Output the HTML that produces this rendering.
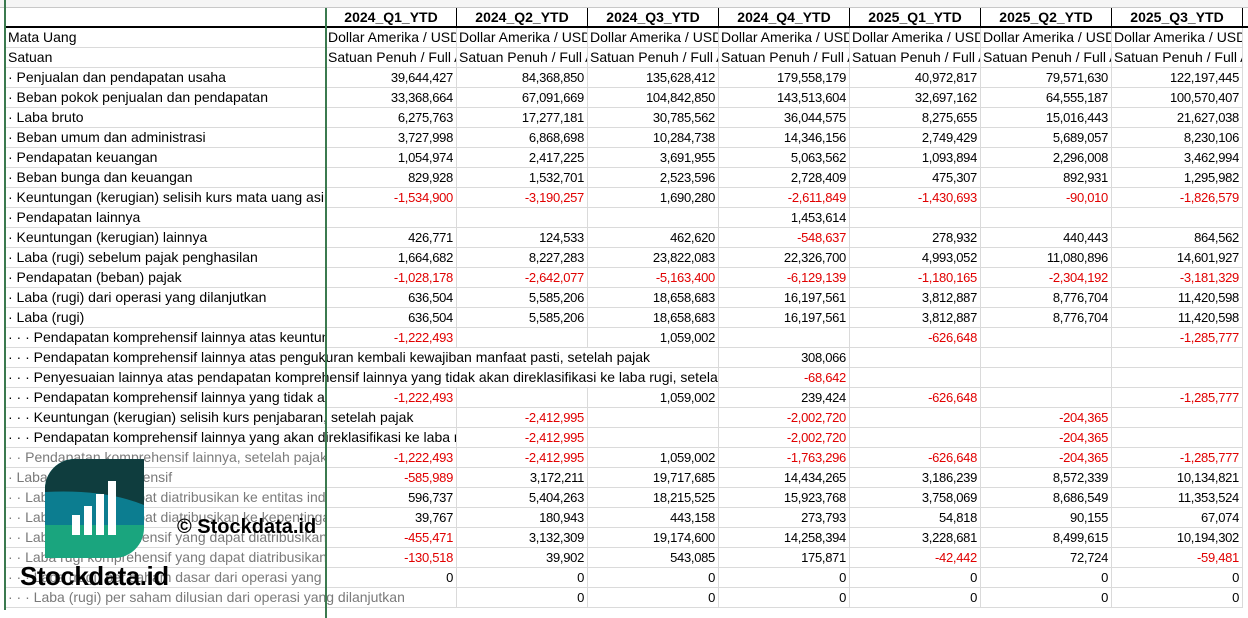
<!DOCTYPE html>
<html><head><meta charset="utf-8"><style>
body{margin:0;width:1248px;height:610px;overflow:hidden;background:#fff;font-family:"Liberation Sans",sans-serif;position:relative}
.top{position:absolute;left:0;top:0;width:1248px;height:7px;background:#f5f5f5;border-bottom:1px solid #c8c8c8}
.row{position:absolute;left:6px;height:20px;display:flex}
.c{width:131px;flex:none;box-sizing:border-box;border-right:1px solid #dadada;border-bottom:1px solid #dadada;text-align:right;padding-right:3px;overflow:hidden;white-space:nowrap;font-size:13px;line-height:19px;color:#000;letter-spacing:-0.3px}
.a{width:320px;text-align:left;padding-left:2px;padding-right:0;font-size:14px;letter-spacing:0}
.l{text-align:left;padding-left:2px;font-size:14px;letter-spacing:0}
.n{color:#e00000}
.g{color:#7a7a7a}
.h .c{font-weight:bold;font-size:14px;letter-spacing:0;text-align:center;border-bottom:2px solid #000;border-right:1px solid #000;padding:0}
.w2{width:451px}.w4{width:713px}
.vl{position:absolute;top:0;height:610px;width:2px;background:#3b7a4f}
</style></head><body>
<div class="top"></div>
<div class="row h" style="top:8px"><div class="c a" style="border-right:none"></div><div class="c">2024_Q1_YTD</div><div class="c">2024_Q2_YTD</div><div class="c">2024_Q3_YTD</div><div class="c">2024_Q4_YTD</div><div class="c">2025_Q1_YTD</div><div class="c">2025_Q2_YTD</div><div class="c">2025_Q3_YTD</div><div class="c"></div></div>
<div class="row" style="top:28px"><div class="c a">Mata Uang</div><div class="c l">Dollar Amerika / USD</div><div class="c l">Dollar Amerika / USD</div><div class="c l">Dollar Amerika / USD</div><div class="c l">Dollar Amerika / USD</div><div class="c l">Dollar Amerika / USD</div><div class="c l">Dollar Amerika / USD</div><div class="c l">Dollar Amerika / USD</div></div>
<div class="row" style="top:48px"><div class="c a">Satuan</div><div class="c l">Satuan Penuh / Full Amount</div><div class="c l">Satuan Penuh / Full Amount</div><div class="c l">Satuan Penuh / Full Amount</div><div class="c l">Satuan Penuh / Full Amount</div><div class="c l">Satuan Penuh / Full Amount</div><div class="c l">Satuan Penuh / Full Amount</div><div class="c l">Satuan Penuh / Full Amount</div></div>
<div class="row" style="top:68px"><div class="c a">· Penjualan dan pendapatan usaha</div><div class="c">39,644,427</div><div class="c">84,368,850</div><div class="c">135,628,412</div><div class="c">179,558,179</div><div class="c">40,972,817</div><div class="c">79,571,630</div><div class="c">122,197,445</div></div>
<div class="row" style="top:88px"><div class="c a">· Beban pokok penjualan dan pendapatan</div><div class="c">33,368,664</div><div class="c">67,091,669</div><div class="c">104,842,850</div><div class="c">143,513,604</div><div class="c">32,697,162</div><div class="c">64,555,187</div><div class="c">100,570,407</div></div>
<div class="row" style="top:108px"><div class="c a">· Laba bruto</div><div class="c">6,275,763</div><div class="c">17,277,181</div><div class="c">30,785,562</div><div class="c">36,044,575</div><div class="c">8,275,655</div><div class="c">15,016,443</div><div class="c">21,627,038</div></div>
<div class="row" style="top:128px"><div class="c a">· Beban umum dan administrasi</div><div class="c">3,727,998</div><div class="c">6,868,698</div><div class="c">10,284,738</div><div class="c">14,346,156</div><div class="c">2,749,429</div><div class="c">5,689,057</div><div class="c">8,230,106</div></div>
<div class="row" style="top:148px"><div class="c a">· Pendapatan keuangan</div><div class="c">1,054,974</div><div class="c">2,417,225</div><div class="c">3,691,955</div><div class="c">5,063,562</div><div class="c">1,093,894</div><div class="c">2,296,008</div><div class="c">3,462,994</div></div>
<div class="row" style="top:168px"><div class="c a">· Beban bunga dan keuangan</div><div class="c">829,928</div><div class="c">1,532,701</div><div class="c">2,523,596</div><div class="c">2,728,409</div><div class="c">475,307</div><div class="c">892,931</div><div class="c">1,295,982</div></div>
<div class="row" style="top:188px"><div class="c a">· Keuntungan (kerugian) selisih kurs mata uang asing</div><div class="c n">-1,534,900</div><div class="c n">-3,190,257</div><div class="c">1,690,280</div><div class="c n">-2,611,849</div><div class="c n">-1,430,693</div><div class="c n">-90,010</div><div class="c n">-1,826,579</div></div>
<div class="row" style="top:208px"><div class="c a">· Pendapatan lainnya</div><div class="c"></div><div class="c"></div><div class="c"></div><div class="c">1,453,614</div><div class="c"></div><div class="c"></div><div class="c"></div></div>
<div class="row" style="top:228px"><div class="c a">· Keuntungan (kerugian) lainnya</div><div class="c">426,771</div><div class="c">124,533</div><div class="c">462,620</div><div class="c n">-548,637</div><div class="c">278,932</div><div class="c">440,443</div><div class="c">864,562</div></div>
<div class="row" style="top:248px"><div class="c a">· Laba (rugi) sebelum pajak penghasilan</div><div class="c">1,664,682</div><div class="c">8,227,283</div><div class="c">23,822,083</div><div class="c">22,326,700</div><div class="c">4,993,052</div><div class="c">11,080,896</div><div class="c">14,601,927</div></div>
<div class="row" style="top:268px"><div class="c a">· Pendapatan (beban) pajak</div><div class="c n">-1,028,178</div><div class="c n">-2,642,077</div><div class="c n">-5,163,400</div><div class="c n">-6,129,139</div><div class="c n">-1,180,165</div><div class="c n">-2,304,192</div><div class="c n">-3,181,329</div></div>
<div class="row" style="top:288px"><div class="c a">· Laba (rugi) dari operasi yang dilanjutkan</div><div class="c">636,504</div><div class="c">5,585,206</div><div class="c">18,658,683</div><div class="c">16,197,561</div><div class="c">3,812,887</div><div class="c">8,776,704</div><div class="c">11,420,598</div></div>
<div class="row" style="top:308px"><div class="c a">· Laba (rugi)</div><div class="c">636,504</div><div class="c">5,585,206</div><div class="c">18,658,683</div><div class="c">16,197,561</div><div class="c">3,812,887</div><div class="c">8,776,704</div><div class="c">11,420,598</div></div>
<div class="row" style="top:328px"><div class="c a">· · · Pendapatan komprehensif lainnya atas keuntungan</div><div class="c n">-1,222,493</div><div class="c"></div><div class="c">1,059,002</div><div class="c"></div><div class="c n">-626,648</div><div class="c"></div><div class="c n">-1,285,777</div></div>
<div class="row" style="top:348px"><div class="c a w4">· · · Pendapatan komprehensif lainnya atas pengukuran kembali kewajiban manfaat pasti, setelah pajak</div><div class="c">308,066</div><div class="c"></div><div class="c"></div><div class="c"></div></div>
<div class="row" style="top:368px"><div class="c a w4">· · · Penyesuaian lainnya atas pendapatan komprehensif lainnya yang tidak akan direklasifikasi ke laba rugi, setelah pajak</div><div class="c n">-68,642</div><div class="c"></div><div class="c"></div><div class="c"></div></div>
<div class="row" style="top:388px"><div class="c a">· · · Pendapatan komprehensif lainnya yang tidak akan</div><div class="c n">-1,222,493</div><div class="c"></div><div class="c">1,059,002</div><div class="c">239,424</div><div class="c n">-626,648</div><div class="c"></div><div class="c n">-1,285,777</div></div>
<div class="row" style="top:408px"><div class="c a w2">· · · Keuntungan (kerugian) selisih kurs penjabaran, setelah pajak</div><div class="c n">-2,412,995</div><div class="c"></div><div class="c n">-2,002,720</div><div class="c"></div><div class="c n">-204,365</div><div class="c"></div></div>
<div class="row" style="top:428px"><div class="c a w2">· · · Pendapatan komprehensif lainnya yang akan direklasifikasi ke laba ru</div><div class="c n">-2,412,995</div><div class="c"></div><div class="c n">-2,002,720</div><div class="c"></div><div class="c n">-204,365</div><div class="c"></div></div>
<div class="row" style="top:448px"><div class="c a g">· · Pendapatan komprehensif lainnya, setelah pajak</div><div class="c n">-1,222,493</div><div class="c n">-2,412,995</div><div class="c">1,059,002</div><div class="c n">-1,763,296</div><div class="c n">-626,648</div><div class="c n">-204,365</div><div class="c n">-1,285,777</div></div>
<div class="row" style="top:468px"><div class="c a g">· Laba (rugi) komprehensif</div><div class="c n">-585,989</div><div class="c">3,172,211</div><div class="c">19,717,685</div><div class="c">14,434,265</div><div class="c">3,186,239</div><div class="c">8,572,339</div><div class="c">10,134,821</div></div>
<div class="row" style="top:488px"><div class="c a g">· · Laba rugi yang dapat diatribusikan ke entitas induk</div><div class="c">596,737</div><div class="c">5,404,263</div><div class="c">18,215,525</div><div class="c">15,923,768</div><div class="c">3,758,069</div><div class="c">8,686,549</div><div class="c">11,353,524</div></div>
<div class="row" style="top:508px"><div class="c a g">· · Laba rugi yang dapat diatribusikan ke kepentingan</div><div class="c">39,767</div><div class="c">180,943</div><div class="c">443,158</div><div class="c">273,793</div><div class="c">54,818</div><div class="c">90,155</div><div class="c">67,074</div></div>
<div class="row" style="top:528px"><div class="c a g">· · Laba rugi komprehensif yang dapat diatribusikan</div><div class="c n">-455,471</div><div class="c">3,132,309</div><div class="c">19,174,600</div><div class="c">14,258,394</div><div class="c">3,228,681</div><div class="c">8,499,615</div><div class="c">10,194,302</div></div>
<div class="row" style="top:548px"><div class="c a g">· · Laba rugi komprehensif yang dapat diatribusikan</div><div class="c n">-130,518</div><div class="c">39,902</div><div class="c">543,085</div><div class="c">175,871</div><div class="c n">-42,442</div><div class="c">72,724</div><div class="c n">-59,481</div></div>
<div class="row" style="top:568px"><div class="c a g">· · · Laba (rugi) per saham dasar dari operasi yang dilanjutkan</div><div class="c">0</div><div class="c">0</div><div class="c">0</div><div class="c">0</div><div class="c">0</div><div class="c">0</div><div class="c">0</div></div>
<div class="row" style="top:588px"><div class="c a w2 g">· · · Laba (rugi) per saham dilusian dari operasi yang dilanjutkan</div><div class="c">0</div><div class="c">0</div><div class="c">0</div><div class="c">0</div><div class="c">0</div><div class="c">0</div></div>
<div class="vl" style="left:4px"></div>
<div class="vl" style="left:325px;top:8px"></div>
<svg style="position:absolute;left:45px;top:459px" width="99" height="99" viewBox="0 0 99 99">
<defs><clipPath id="k"><path d="M30 0H99V69A30 30 0 0 1 69 99H0V30A30 30 0 0 1 30 0Z"/></clipPath></defs>
<g clip-path="url(#k)">
<rect width="99" height="99" fill="#1aa57e"/>
<rect width="99" height="66" fill="#0c7d90"/>
<path d="M0 0H99V46Q60 30 0 33Z" fill="#0f3d3e"/>
</g>
<rect x="27" y="56" width="8" height="20" fill="#fff"/>
<rect x="39" y="47" width="8" height="29" fill="#fff"/>
<rect x="51" y="35" width="8" height="41" fill="#fff"/>
<rect x="63" y="22" width="8" height="54" fill="#fff"/>
</svg>
<div style="position:absolute;left:177px;top:516px;font:bold 20px 'Liberation Sans',sans-serif;color:#000;white-space:nowrap">© Stockdata.id</div>
<div style="position:absolute;left:20px;top:561px;font:bold 26px 'Liberation Sans',sans-serif;color:#000;letter-spacing:-0.5px;white-space:nowrap">Stockdata.id</div>
</body></html>
